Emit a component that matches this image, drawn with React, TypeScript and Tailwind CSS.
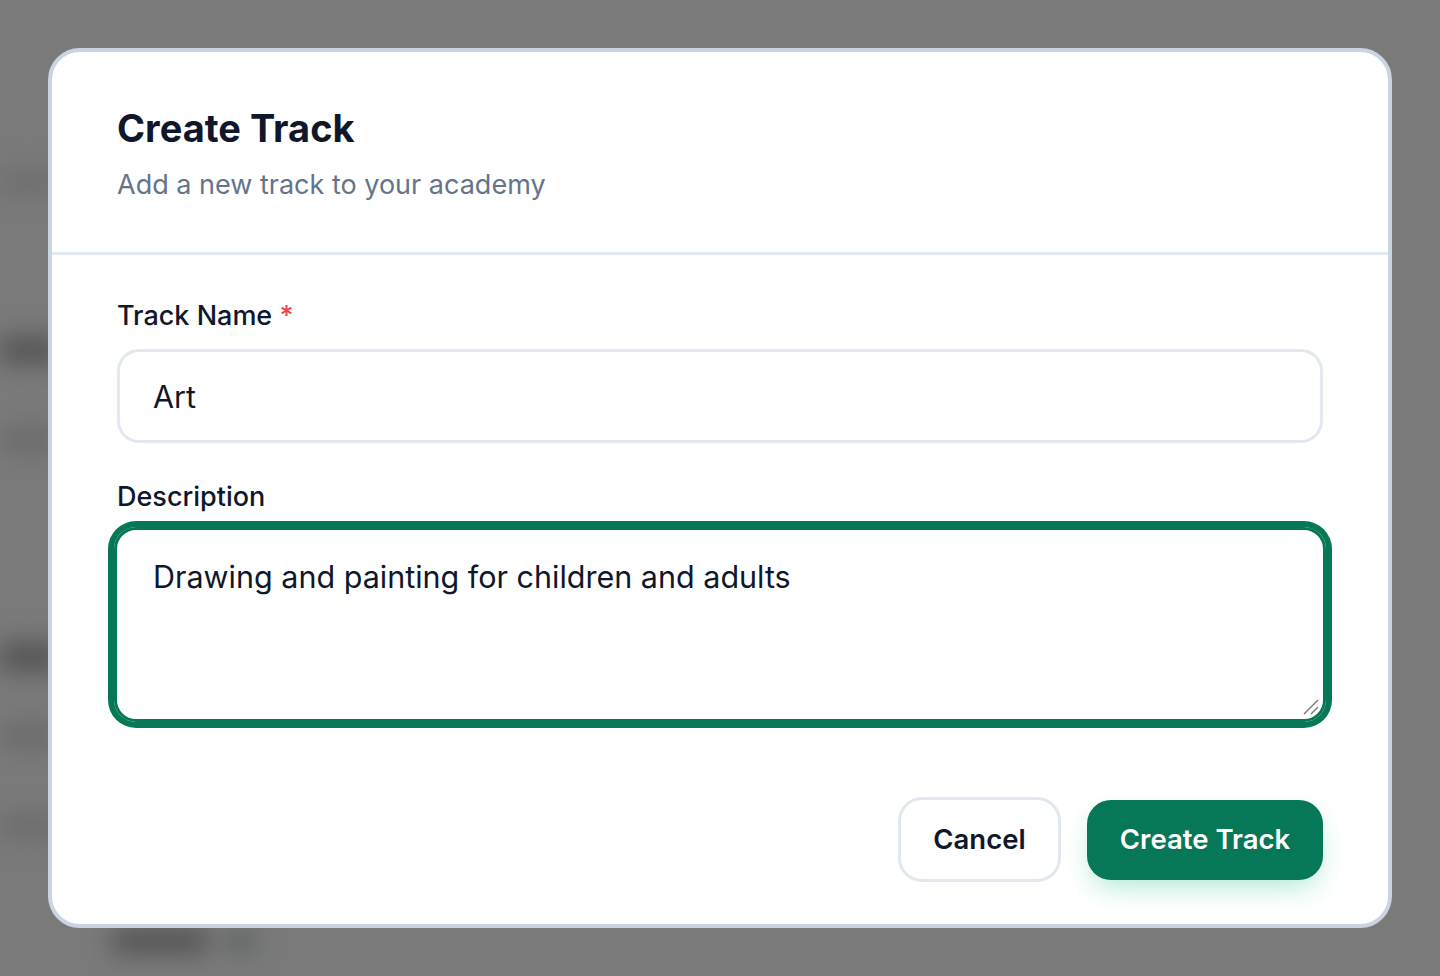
import React from "react";

const font = { fontFamily: "Inter, 'Noto Sans', sans-serif" };

function Backdrop() {
  // blurred page behind the dialog
  return (
    <div className="flex h-full w-[300px] flex-col blur-md">
      <div className="h-[170px]" />
      <div className="ml-0 h-[24px] w-[60px] bg-[#6e6e6e]" />
      <div className="h-[142px]" />
      <div className="h-[28px] w-[60px] bg-[#555]" />
      <div className="h-[64px]" />
      <div className="h-[24px] w-[60px] bg-[#6a6a6a]" />
      <div className="h-[190px]" />
      <div className="h-[30px] w-[60px] bg-[#555]" />
      <div className="h-[52px]" />
      <div className="h-[24px] w-[60px] bg-[#6a6a6a]" />
      <div className="h-[66px]" />
      <div className="h-[24px] w-[60px] bg-[#6c6c6c]" />
      <div className="h-[90px]" />
      <div className="flex gap-4 pl-[110px]">
        <div className="h-[26px] w-[100px] rounded-full bg-[#555]" />
        <div className="h-[26px] w-[30px] rounded-full bg-[#5f6564]" />
      </div>
    </div>
  );
}

export default function App() {
  return (
    <div className="relative h-[976px] w-[1440px] overflow-hidden bg-[#7a7a7a]" style={font}>
      <Backdrop />
      <div className="absolute inset-0 flex items-center justify-center">
        <div className="flex h-[880px] w-[1344px] flex-col rounded-[32px] border-4 border-[#cbd5e1] bg-white">
          <div className="border-b-[3px] border-[#e2e8f0] px-[65px] pb-[49px] pt-[54px]">
            <h2 className="text-[38px] font-bold leading-[44px] text-[#0f172a]">Create Track</h2>
            <p className="mt-[17px] text-[27px] leading-[36px] text-[#64748b]">Add a new track to your academy</p>
          </div>

          <div className="flex flex-1 flex-col px-[65px] pb-[42px] pt-[43px]">
            <label className="text-[27px] font-medium leading-[36px] text-[#0f172a]">
              Track Name <span className="text-[#ef4444]">*</span>
            </label>
            <input
              className="mt-[15px] h-[94px] rounded-[22px] border-[3px] border-[#e2e8f0] px-[33px] text-[30.5px] text-[#0f172a] outline-none"
              defaultValue="Art"
            />

            <label className="mt-[36px] text-[27px] font-medium leading-[36px] text-[#0f172a]">Description</label>
            <div className="relative -mx-[3px] mt-[12px]">
              <textarea
                className="block h-[195px] w-full resize-none rounded-[22px] border-[3px] border-[#077857] px-[36px] pt-[27px] text-[30.5px] leading-[40px] text-[#0f172a] outline-none ring-[6px] ring-[#077857]"
                defaultValue="Drawing and painting for children and adults"
              />
              <svg className="absolute bottom-[7px] right-[7px] h-[16px] w-[16px]" viewBox="0 0 16 16">
                <path d="M1 15 L15 1 M8 15 L15 8" stroke="#777" strokeWidth="1.4" fill="none" />
              </svg>
            </div>

            <div className="mt-auto flex items-center justify-end gap-[26px]">
              <button className="h-[85px] w-[163px] rounded-[24px] border-[3px] border-[#e2e8f0] bg-white text-[27.5px] font-semibold text-[#0f172a]">
                Cancel
              </button>
              <button className="h-[80px] w-[236px] rounded-[24px] bg-[#077857] text-[27.5px] font-semibold text-white shadow-[0_12px_28px_-6px_rgba(16,185,129,0.35)]">
                Create Track
              </button>
            </div>
          </div>
        </div>
      </div>
    </div>
  );
}
